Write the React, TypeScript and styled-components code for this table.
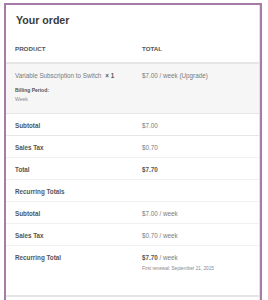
import React from "react";
import styled, { createGlobalStyle } from "styled-components";

const GlobalStyle = createGlobalStyle`
  html, body {
    margin: 0;
    padding: 0;
    background: #ffffff;
    font-family: "Liberation Sans", Arial, sans-serif;
    overflow: hidden;
  }
`;

const Frame = styled.div`
  margin: 3px 0 0 4px;
  width: 254px;
  height: 297px;
  border: 2px solid #a87aa8;
  border-bottom: none;
  background: #fff;
  overflow: hidden;
`;

const Card = styled.div`
  border-right: 1px solid #e2e2e2;
  height: 100%;
`;

const Heading = styled.h3`
  margin: 0;
  height: 30px;
  padding: 0 0 0 10px;
  display: flex;
  align-items: center;
  font-size: 10.6px;
  font-weight: 600;
  color: #3a3a3a;
`;

const Row = styled.div<{ $height: number; $shaded?: boolean; $top?: boolean }>`
  display: grid;
  grid-template-columns: 127px 1fr;
  align-items: start;
  height: ${(p) => p.$height}px;
  box-sizing: border-box;
  padding: 0 0 0 9px;
  background: ${(p) => (p.$shaded ? "#f6f6f6" : "transparent")};
  border-top: 1px solid ${(p) => (p.$top ? "#e6e6e6" : "#f0f0f0")};
`;

const HeadRow = styled(Row)`
  border-top: none;
  border-bottom: 1px solid #e6e6e6;
  align-items: center;
`;

const HeadCell = styled.div`
  font-size: 6.2px;
  font-weight: 700;
  text-transform: uppercase;
  color: #555555;
`;

const Label = styled.div`
  font-size: 6.3px;
  font-weight: 700;
  color: #555555;
  line-height: 8px;
  padding-top: 8px;
`;

const Value = styled.div`
  font-size: 6.3px;
  color: #7a7a7a;
  line-height: 8px;
  padding-top: 8px;

  strong {
    color: #555555;
    font-weight: 700;
  }
`;

const ProductName = styled.div`
  font-size: 6.3px;
  color: #7a7a7a;
  line-height: 8px;
  padding-top: 8px;

  strong {
    color: #555555;
    font-weight: 700;
    margin-left: 4px;
  }
`;

const Meta = styled.dl`
  margin: 6px 0 0;
  font-size: 5px;
  line-height: 8px;

  dt {
    font-weight: 700;
    color: #555555;
  }
  dd {
    margin: 1px 0 0;
    color: #888888;
  }
`;

const Renewal = styled.div`
  font-size: 4.7px;
  color: #888888;
  margin-top: 4px;
`;

const BottomLine = styled.div`
  border-top: 2px solid #e4e4e4;
`;

const totals = [
  { label: "Subtotal", value: "$7.00" },
  { label: "Sales Tax", value: "$0.70" },
];

const recurring = [
  { label: "Subtotal", value: "$7.00 / week" },
  { label: "Sales Tax", value: "$0.70 / week" },
];

export default function App() {
  return (
    <>
      <GlobalStyle />
      <Frame>
        <Card>
          <Heading>Your order</Heading>
          <HeadRow $height={28}>
            <HeadCell>Product</HeadCell>
            <HeadCell>Total</HeadCell>
          </HeadRow>
          <Row $height={50} $shaded $top>
            <div>
              <ProductName>
                Variable Subscription to Switch<strong>× 1</strong>
              </ProductName>
              <Meta>
                <dt>Billing Period:</dt>
                <dd>Week</dd>
              </Meta>
            </div>
            <Value>$7.00 / week (Upgrade)</Value>
          </Row>
          {totals.map((t) => (
            <Row key={t.label} $height={22} $top>
              <Label>{t.label}</Label>
              <Value>{t.value}</Value>
            </Row>
          ))}
          <Row $height={22}>
            <Label>Total</Label>
            <Value>
              <strong>$7.70</strong>
            </Value>
          </Row>
          <Row $height={22}>
            <Label>Recurring Totals</Label>
            <div />
          </Row>
          {recurring.map((t) => (
            <Row key={"r" + t.label} $height={22}>
              <Label>{t.label}</Label>
              <Value>{t.value}</Value>
            </Row>
          ))}
          <Row $height={50}>
            <Label>Recurring Total</Label>
            <div>
              <Value>
                <strong>$7.70</strong> / week
              </Value>
              <Renewal>First renewal: September 21, 2015</Renewal>
            </div>
          </Row>
          <BottomLine />
        </Card>
      </Frame>
    </>
  );
}
